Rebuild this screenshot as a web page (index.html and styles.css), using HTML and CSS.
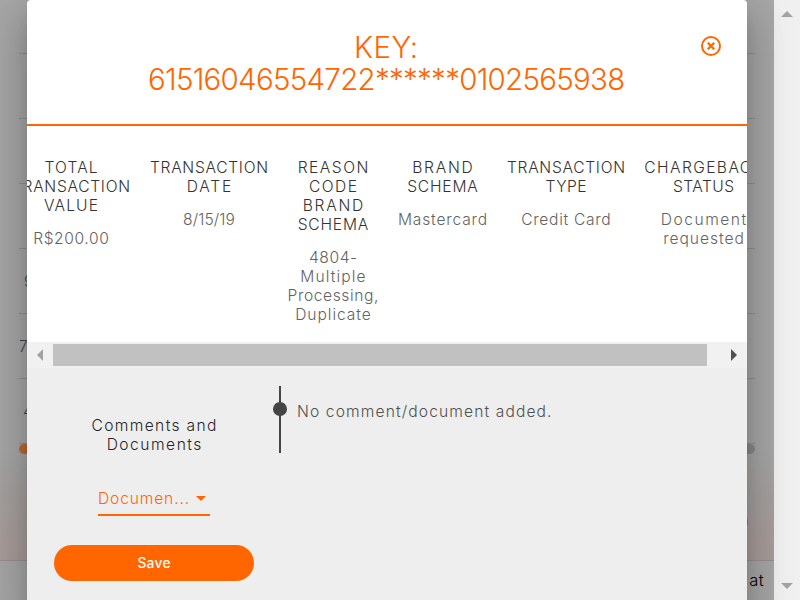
FILE: index.html
```
<!DOCTYPE html>
<html lang="en">
<head>
<meta charset="utf-8">
<title>Chargeback</title>
<link rel="stylesheet" href="styles.css">
</head>
<body>
<div class="app">
  <main class="page">
    <div class="content">
      <div class="row row-first"></div>
      <div class="row"></div>
      <div class="row"></div>
      <div class="row"></div>
      <div class="row"><span class="peek-nine">9</span></div>
      <div class="row"><span class="peek-seven">7</span></div>
      <div class="row"><span class="peek-four">4</span></div>
      <div class="track"></div>
      <div class="card-end"></div>
      <div class="pager"><span class="pager-ring"></span></div>
    </div>
    <footer class="footer">at</footer>
  </main>
  <div class="scrollbar">
    <svg width="12" height="6" viewBox="0 0 12 6"><path d="M0 6L6 0L12 6Z"/></svg>
    <svg width="12" height="6" viewBox="0 0 12 6"><path d="M0 0L6 6L12 0Z"/></svg>
  </div>
</div>

<section class="dialog">
  <header class="header">
    <h1 class="title"><span class="ln s-key">KEY:</span><span class="ln s-num">61516046554722******0102565938</span></h1>
    <svg class="close" width="22" height="22" viewBox="0 0 22 22"><circle cx="11" cy="11" r="9"/><path d="M7.8 7.8L14.2 14.2M14.2 7.8L7.8 14.2"/></svg>
  </header>
  <div class="details">
    <div class="col wide">
      <h2><span class="ln s13">TOTAL</span><span class="ln s9">TRANSACTION</span><span class="ln s13">VALUE</span></h2>
      <p><span class="ln s8">R$200.00</span></p>
    </div>
    <div class="col wide">
      <h2><span class="ln s9">TRANSACTION</span><span class="ln s20">DATE</span></h2>
      <p><span class="ln s2">8/15/19</span></p>
    </div>
    <div class="col narrow">
      <h2><span class="ln s18">REASON</span><span class="ln s18">CODE</span><span class="ln s20">BRAND</span><span class="ln s10">SCHEMA</span></h2>
      <p><span class="ln s8">4804-</span><span class="ln s13">Multiple</span><span class="ln s8">Processing,</span><span class="ln s11">Duplicate</span></p>
    </div>
    <div class="col brand">
      <h2><span class="ln s20">BRAND</span><span class="ln s10">SCHEMA</span></h2>
      <p><span class="ln s10">Mastercard</span></p>
    </div>
    <div class="col wide">
      <h2><span class="ln s9">TRANSACTION</span><span class="ln s6">TYPE</span></h2>
      <p><span class="ln s9">Credit Card</span></p>
    </div>
    <div class="col status">
      <h2><span class="ln s14">CHARGEBACK</span><span class="ln s6">STATUS</span></h2>
      <p><span class="ln s17">Document</span><span class="ln s11">requested</span></p>
    </div>
  </div>
  <div class="hscroll">
    <svg class="off" width="6" height="12" viewBox="0 0 6 12"><path d="M6 0L0 6L6 12Z"/></svg>
    <div class="thumb"></div>
    <svg class="on" width="6" height="12" viewBox="0 0 6 12"><path d="M0 0L6 6L0 12Z"/></svg>
  </div>
  <div class="lower">
    <div class="side">
      <h3><span class="ln s15">Comments and</span><span class="ln s17">Documents</span></h3>
      <div class="select"><span class="ln s-select">Documen...</span><svg width="10" height="5" viewBox="0 0 10 5"><path d="M0 0H10L5 5Z"/></svg></div>
      <button class="save"><span class="ln s5">Save</span></button>
    </div>
    <div class="timeline"><div class="rail"><span class="dot"></span></div><p><span class="ln s13">No comment/document added.</span></p></div>
  </div>
</section>
</body>
</html>
```
FILE: styles.css
```
* { box-sizing: border-box; }
body { margin: 0; width: 800px; height: 600px; overflow: hidden; font-family: Inter, "Open Sans", sans-serif; font-size: 15.6px; font-weight: 300; line-height: 19px; }
h1, h2, h3, p { margin: 0; font-weight: 300; font-size: inherit; }

.app { display: flex; height: 600px; }
.page { width: 774px; background: #a7a7a7; display: flex; flex-direction: column; }
.content { height: 560px; padding: 0 19px; background: linear-gradient(#a7a7a7 450px, #a6a19f 500px, #a99c9a 560px); }
.row { height: 65px; border-bottom: 1px solid #8f8f8f; display: flex; align-items: center; color: #444; }
.row-first { height: 54px; }
.peek-nine { margin-left: 5px; }
.peek-seven { margin-left: 0; }
.peek-four { margin-left: 4px; }
.track { height: 10px; border-radius: 5px; background: linear-gradient(90deg, #bb6a35 50%, #8a8a8a 50%); }
.card-end { height: 16px; border-bottom: 1px solid #a0a0a0; }
.pager { display: flex; justify-content: flex-end; padding: 42px 7px 0 0; }
.pager-ring { width: 20px; height: 20px; border: 2px solid #b0602a; border-radius: 10px; }
.footer { height: 40px; border-top: 1px solid #969090; background: #a7a7a7; color: #000; text-align: right; padding: 10px 10px 0 0; font-size: 16.5px; letter-spacing: .4px; }
.scrollbar { width: 26px; height: 600px; padding: 11px 0; background: #f0f0f0; display: flex; flex-direction: column; align-items: center; justify-content: space-between; fill: #a3a3a3; }

.dialog { position: absolute; left: 27px; top: 0; width: 720px; height: 620px; background: #fff; border-radius: 4px; overflow: hidden; display: flex; flex-direction: column; box-shadow: 0 11px 15px -7px rgba(0,0,0,.2), 0 24px 38px 3px rgba(0,0,0,.14), 0 9px 46px 8px rgba(0,0,0,.12); }
.ln { display: block; white-space: nowrap; letter-spacing: var(--ls); margin-right: calc(-1 * var(--ls)); }
.s2 { --ls: .1px; }
.s5 { --ls: .3px; }
.s6 { --ls: .45px; }
.s8 { --ls: .6px; }
.s9 { --ls: .7px; }
.s10 { --ls: .83px; }
.s11 { --ls: .95px; }
.s13 { --ls: 1.12px; }
.s14 { --ls: 1.4px; }
.s15 { --ls: 1.35px; }
.s17 { --ls: 1.5px; }
.s18 { --ls: 1.5px; }
.s20 { --ls: 1.75px; }
.s-select { --ls: .85px; }
.s-key { --ls: .4px; }
.s-num { --ls: -.72px; }

.header { height: 126px; flex: none; border-bottom: 2px solid #f60; color: #f60; display: flex; justify-content: flex-end; padding: 31px 25px 0 0; }
.title { width: 476px; margin-right: 76px; font-size: 29.5px; line-height: 32px; text-align: center; }
.close { margin-top: 4px; fill: none; stroke: #f60; stroke-width: 2; }
.close path { stroke-width: 2.3; }

.details { display: flex; height: 216px; flex: none; margin-left: -25px; padding-top: 32px; text-align: center; }
.col { flex: none; display: flex; flex-direction: column; gap: 14px; }
.col h2 { color: #333; }
.col p { color: #636363; }
.wide { width: 138px; }
.narrow { width: 110px; }
.brand { width: 109px; }
.status { width: 137px; }

.hscroll { height: 26px; flex: none; background: #f1f1f1; display: flex; align-items: center; justify-content: space-between; padding: 0 10px; }
.thumb { width: 654px; height: 22px; margin-right: 24px; background: #c1c1c1; }
.off { fill: #a3a3a3; margin-right: 10px; }
.on { fill: #505050; }

.lower { flex: 1; background: #eee; display: flex; gap: 19px; padding: 18px 27px 0; }
.side { width: 200px; display: flex; flex-direction: column; align-items: center; padding-top: 30px; }
.side h3 { text-align: center; color: #262626; }
.select { width: 112px; height: 30px; margin-top: 32px; padding: 3px 4px 0 0; border-bottom: 2px solid #f60; color: #f60; fill: #f60; display: flex; justify-content: space-between; }
.select svg { margin-top: 7px; }
.save { width: 200px; height: 36px; margin-top: 29px; padding: 0; border: 0; border-radius: 18px; background: #f60; color: #fff; font: 500 13.8px Inter, sans-serif; text-align: center; }
.timeline { display: flex; gap: 10px; }
.rail { width: 14px; height: 67px; padding-top: 16px; background: linear-gradient(#444, #444) 50% 0 / 2px 100% no-repeat; }
.dot { display: block; width: 14px; height: 14px; border-radius: 7px; background: #444; }
.timeline p { padding-top: 16px; color: #505050; }
```
